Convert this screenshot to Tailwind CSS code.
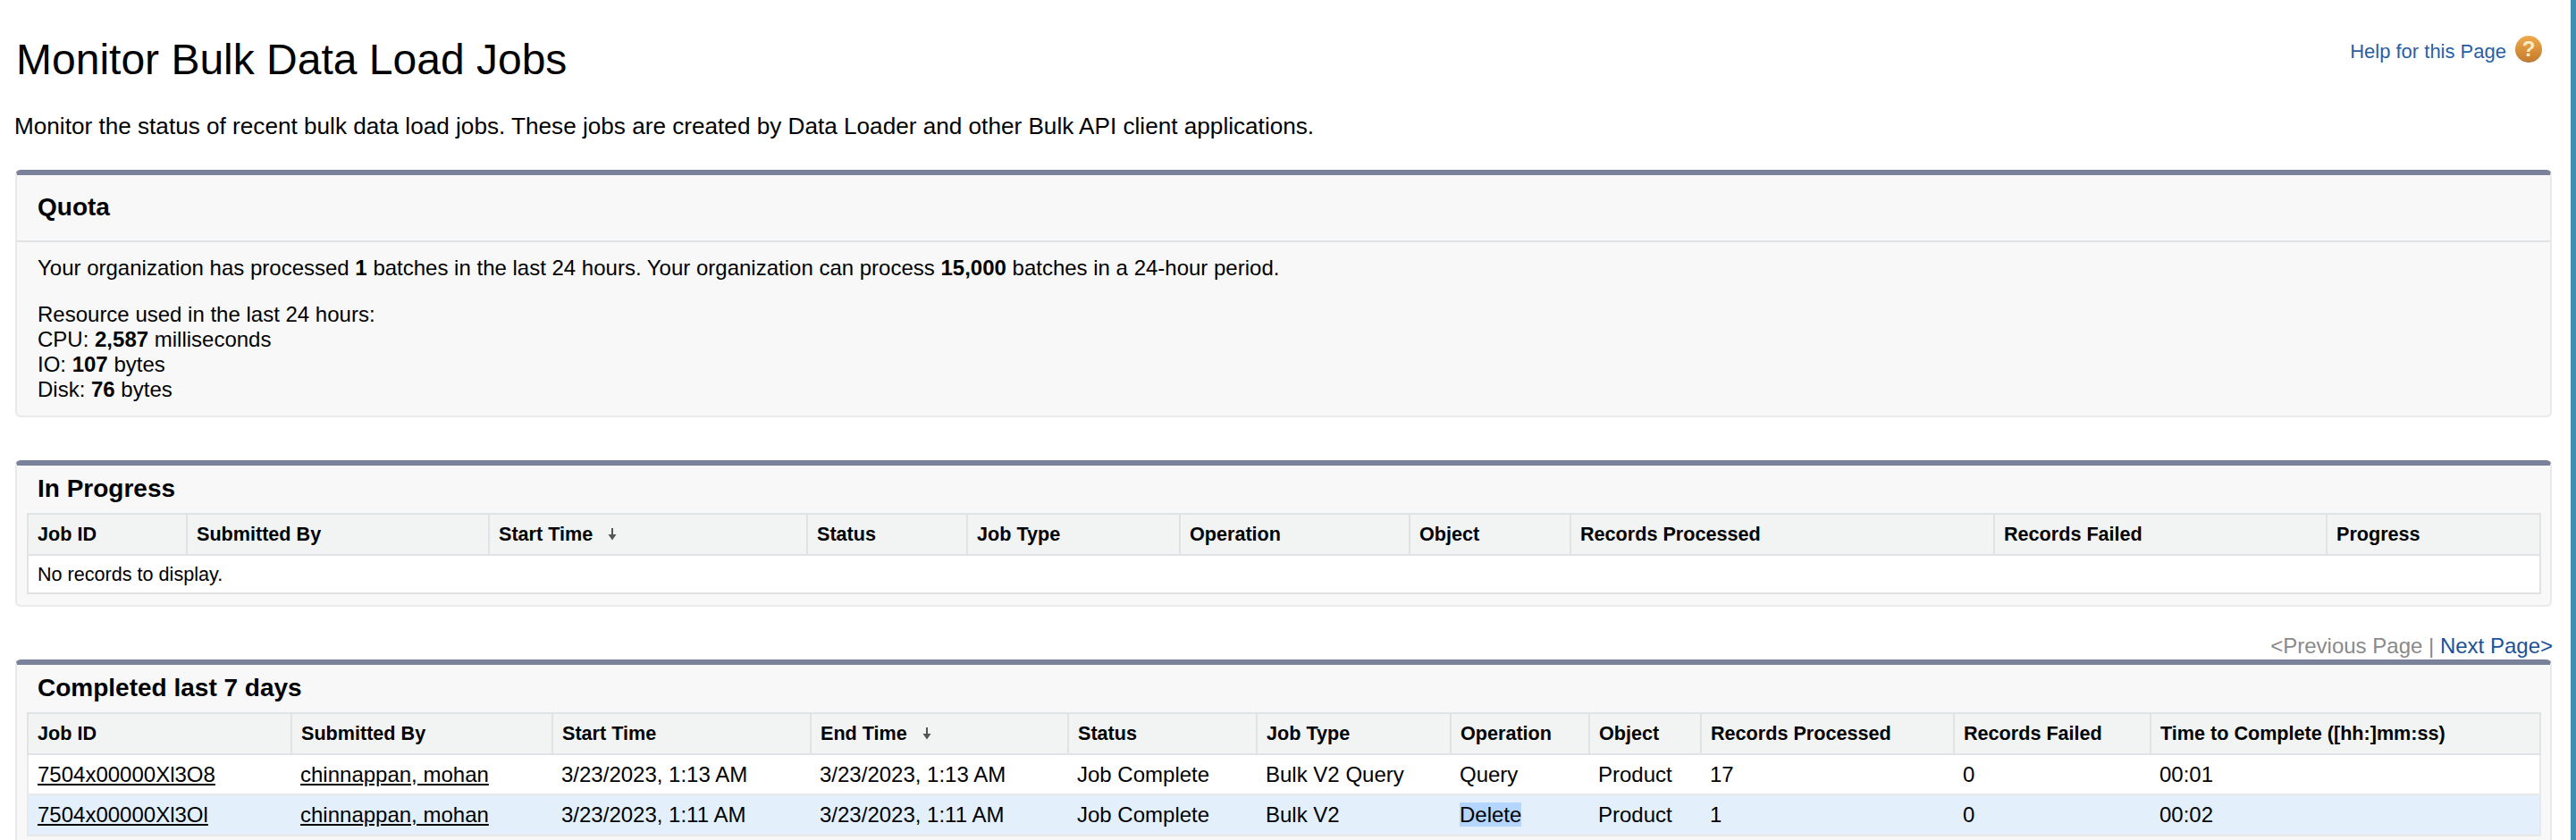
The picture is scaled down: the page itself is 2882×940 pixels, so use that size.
<!DOCTYPE html>
<html lang="en">
<head>
  <meta charset="UTF-8" />
  <title>Monitor Bulk Data Load Jobs</title>
  <script src="https://cdn.jsdelivr.net/npm/@tailwindcss/browser@4"></script>
</head>
<body class="h-screen overflow-hidden bg-white text-black font-['Liberation_Sans',Arial,sans-serif] text-[24px] leading-[28px]">
  <div class="h-screen flex">
    <main class="flex-1 min-w-0 pl-[17px] pr-[21px]">

      <!-- page title -->
      <div class="flex justify-between h-[127px]">
        <h1 class="pt-[38px] pl-px text-[48px] leading-[58px] font-normal">Monitor Bulk Data Load Jobs</h1>
        <a class="flex items-start gap-[10px] pt-[40px] pr-[11px] text-[22px] leading-[30px] text-[#2a5fa5]">
          <span class="pt-[3px]">Help for this Page</span>
          <span class="w-[30px] h-[30px] rounded-full bg-gradient-to-b from-[#eeaa4c] to-[#c67c2c] border-b border-[#a8733a] text-[#fdeacb] font-bold text-[24px] text-center">?</span>
        </a>
      </div>
      <p class="h-[63px] -ml-px text-[26.15px]">Monitor the status of recent bulk data load jobs. These jobs are created by Data Loader and other Bulk API client applications.</p>

      <!-- quota -->
      <section class="h-[277px] bg-[#f8f8f8] border-t-[6px] border-x-2 border-b-2 border-t-[#7a829b] border-x-[#eaeaea] border-b-[#eaeaea] rounded-[6px]">
        <h2 class="h-[75px] pt-[22px] pl-[23px] font-bold text-[28px] border-b-2 border-[#e0e3e5]">Quota</h2>
        <div class="pt-[15px] pl-[23px]">
          <p class="mb-[24px]">Your organization has processed <b>1</b> batches in the last 24 hours. Your organization can process <b>15,000</b> batches in a 24-hour period.</p>
          <p>Resource used in the last 24 hours:<br />CPU: <b>2,587</b> milliseconds<br />IO: <b>107</b> bytes<br />Disk: <b>76</b> bytes</p>
        </div>
      </section>

      <div class="h-[48px]"></div>

      <!-- in progress -->
      <section class="h-[164px] bg-[#f8f8f8] border-t-[6px] border-x-2 border-b-2 border-t-[#7a829b] border-x-[#eaeaea] border-b-[#eaeaea] rounded-[6px]">
        <h2 class="h-[53px] pt-[12px] pl-[23px] font-bold text-[28px]">In Progress</h2>
        <table class="table-fixed ml-[11px] w-[2811px] border-collapse text-[21.6px] leading-[28px]">
          <colgroup>
            <col class="w-[178px]" /><col class="w-[338px]" /><col class="w-[356px]" /><col class="w-[179px]" /><col class="w-[238px]" /><col class="w-[257px]" /><col class="w-[180px]" /><col class="w-[474px]" /><col class="w-[372px]" /><col class="w-[239px]" />
          </colgroup>
          <thead>
            <tr class="h-[46px] bg-[#f2f3f3] text-left">
              <th class="border-2 border-[#e0e3e5] pl-[10px] font-bold">Job ID</th>
              <th class="border-2 border-[#e0e3e5] pl-[10px] font-bold">Submitted By</th>
              <th class="border-2 border-[#e0e3e5] pl-[10px] font-bold">
                <span class="inline-flex items-center gap-[16px]">Start Time
                  <svg class="w-[12px] h-[14px]" viewBox="0 0 12 14"><path d="M5 0h2v7h3.500L6 13.500 1.500 7H5z" fill="#555" /></svg>
                </span>
              </th>
              <th class="border-2 border-[#e0e3e5] pl-[10px] font-bold">Status</th>
              <th class="border-2 border-[#e0e3e5] pl-[10px] font-bold">Job Type</th>
              <th class="border-2 border-[#e0e3e5] pl-[10px] font-bold">Operation</th>
              <th class="border-2 border-[#e0e3e5] pl-[10px] font-bold">Object</th>
              <th class="border-2 border-[#e0e3e5] pl-[10px] font-bold">Records Processed</th>
              <th class="border-2 border-[#e0e3e5] pl-[10px] font-bold">Records Failed</th>
              <th class="border-2 border-[#e0e3e5] pl-[10px] font-bold">Progress</th>
            </tr>
          </thead>
          <tbody>
            <tr class="h-[43px] bg-white">
              <td colspan="10" class="border-2 border-[#e0e3e5] pl-[10px]">No records to display.</td>
            </tr>
          </tbody>
        </table>
      </section>

      <!-- pagination -->
      <div class="h-[59px] pt-[30px] -mr-px text-right text-[#8a8a8a]">&lt;Previous Page | <a class="text-[#1b5297]">Next Page&gt;</a></div>

      <!-- completed -->
      <section class="h-[400px] bg-[#f8f8f8] border-t-[6px] border-x-2 border-b-2 border-t-[#7a829b] border-x-[#eaeaea] border-b-[#eaeaea] rounded-[6px]">
        <h2 class="h-[53px] pt-[12px] pl-[23px] font-bold text-[28px]">Completed last 7 days</h2>
        <table class="table-fixed ml-[11px] w-[2811px] border-collapse text-[21.6px] leading-[28px]">
          <colgroup>
            <col class="w-[295px]" /><col class="w-[292px]" /><col class="w-[289px]" /><col class="w-[288px]" /><col class="w-[211px]" /><col class="w-[217px]" /><col class="w-[155px]" /><col class="w-[125px]" /><col class="w-[283px]" /><col class="w-[220px]" /><col class="w-[436px]" />
          </colgroup>
          <thead>
            <tr class="h-[46px] bg-[#f2f3f3] text-left">
              <th class="border-2 border-[#e0e3e5] pl-[10px] font-bold">Job ID</th>
              <th class="border-2 border-[#e0e3e5] pl-[10px] font-bold">Submitted By</th>
              <th class="border-2 border-[#e0e3e5] pl-[10px] font-bold">Start Time</th>
              <th class="border-2 border-[#e0e3e5] pl-[10px] font-bold">
                <span class="inline-flex items-center gap-[16px]">End Time
                  <svg class="w-[12px] h-[14px]" viewBox="0 0 12 14"><path d="M5 0h2v7h3.500L6 13.500 1.500 7H5z" fill="#555" /></svg>
                </span>
              </th>
              <th class="border-2 border-[#e0e3e5] pl-[10px] font-bold">Status</th>
              <th class="border-2 border-[#e0e3e5] pl-[10px] font-bold">Job Type</th>
              <th class="border-2 border-[#e0e3e5] pl-[10px] font-bold">Operation</th>
              <th class="border-2 border-[#e0e3e5] pl-[10px] font-bold">Object</th>
              <th class="border-2 border-[#e0e3e5] pl-[10px] font-bold">Records Processed</th>
              <th class="border-2 border-[#e0e3e5] pl-[10px] font-bold">Records Failed</th>
              <th class="border-2 border-[#e0e3e5] pl-[10px] font-bold">Time to Complete ([hh:]mm:ss)</th>
            </tr>
          </thead>
          <tbody class="text-[24px]">
            <tr class="h-[45px] bg-white border-x-2 border-b-2 border-[#e8e8e8]">
              <td class="pl-[10px] underline">7504x00000Xl3O8</td>
              <td class="pl-[10px] underline">chinnappan, mohan</td>
              <td class="pl-[10px]">3/23/2023, 1:13 AM</td>
              <td class="pl-[10px]">3/23/2023, 1:13 AM</td>
              <td class="pl-[10px]">Job Complete</td>
              <td class="pl-[10px]">Bulk V2 Query</td>
              <td class="pl-[10px]">Query</td>
              <td class="pl-[10px]">Product</td>
              <td class="pl-[10px]">17</td>
              <td class="pl-[10px]">0</td>
              <td class="pl-[10px]">00:01</td>
            </tr>
            <tr class="h-[46px] bg-[#e3f0fc] border-x-2 border-b-2 border-[#e8e8e8]">
              <td class="pl-[10px] underline">7504x00000Xl3Ol</td>
              <td class="pl-[10px] underline">chinnappan, mohan</td>
              <td class="pl-[10px]">3/23/2023, 1:11 AM</td>
              <td class="pl-[10px]">3/23/2023, 1:11 AM</td>
              <td class="pl-[10px]">Job Complete</td>
              <td class="pl-[10px]">Bulk V2</td>
              <td class="pl-[10px]"><span class="bg-[#b4d5fe]">Delete</span></td>
              <td class="pl-[10px]">Product</td>
              <td class="pl-[10px]">1</td>
              <td class="pl-[10px]">0</td>
              <td class="pl-[10px]">00:02</td>
            </tr>
          </tbody>
        </table>
      </section>
    </main>
    <div class="w-[6px] bg-[#3f8fb3]"></div>
  </div>
</body>
</html>
